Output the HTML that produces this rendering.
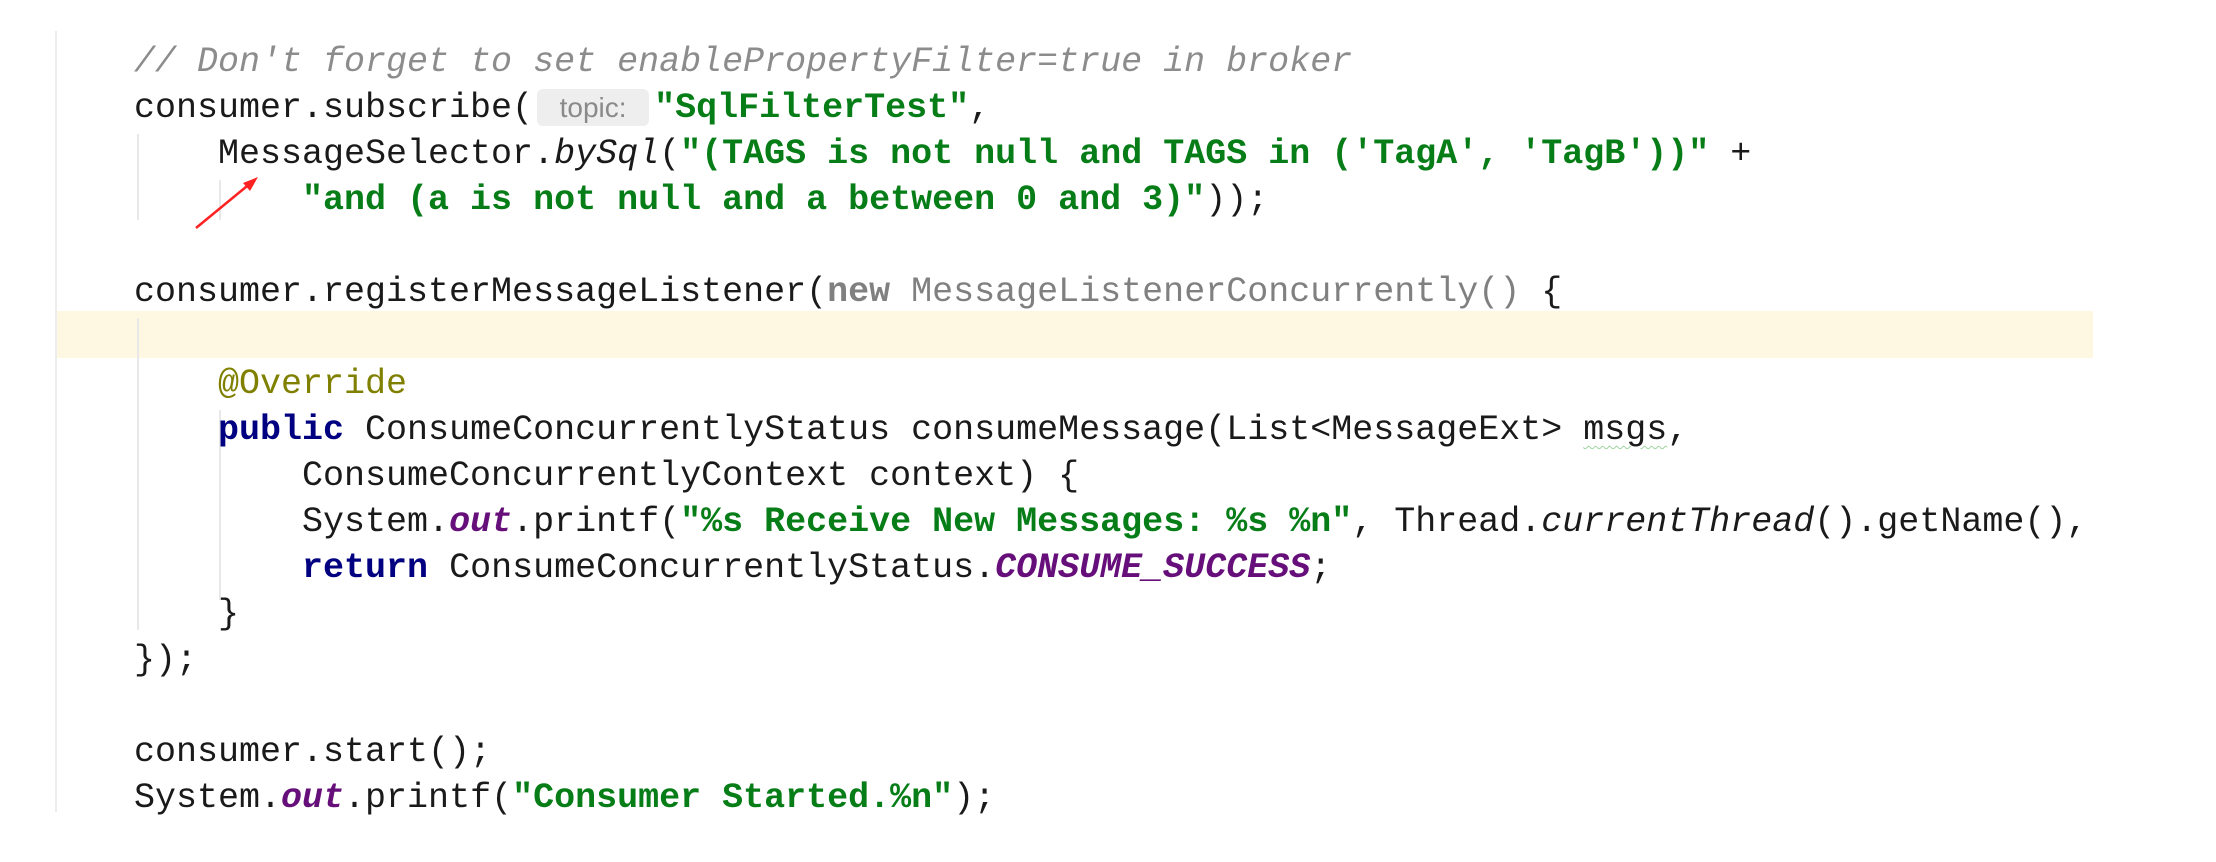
<!DOCTYPE html>
<html><head><meta charset="utf-8"><style>
html,body{margin:0;padding:0;background:#fff;width:2216px;height:862px;overflow:hidden;position:relative}
.gut{position:absolute;left:55px;top:31px;width:2px;height:781px;background:#ededed}
.hl{position:absolute;left:57px;top:311px;width:2036px;height:47px;background:#fef8e2}
.g{position:absolute;width:2px;background:#e8e8e8}
.code{position:absolute;left:134px;top:39px;font-family:"Liberation Mono",monospace;font-size:35px;line-height:46px;color:#1a1a1a;white-space:pre}
.s{color:#067d17;font-weight:bold}
.k{color:#000080;font-weight:bold}
.c{color:#8c8c8c;font-style:italic}
.a{color:#808000}
.p{color:#660e7a;font-style:italic;font-weight:bold}
.i{font-style:italic}
.gr{color:#808080}
.hint{display:inline-block;margin-left:4px;margin-right:5px;width:112px;height:37px;line-height:37px;vertical-align:0px;background:#eeeeee;border-radius:6px;color:#8a8a8a;font-family:"Liberation Sans",sans-serif;font-size:28px;text-align:center}
.sq{text-decoration:underline wavy #9fd39f;text-decoration-thickness:1px;text-underline-offset:6px}
</style></head><body>
<div class="gut"></div>
<div class="hl"></div>
<div class="g" style="left:137px;top:134px;height:86px"></div>
<div class="g" style="left:137px;top:318px;height:312px"></div>
<div class="g" style="left:219px;top:180px;height:40px"></div>
<div class="g" style="left:219px;top:410px;height:190px"></div>
<div class="code"><span class="c">// Don't forget to set enablePropertyFilter=true in broker</span>
consumer.subscribe(<span class="hint">topic:</span><span class="s">"SqlFilterTest"</span>,
    MessageSelector.<span class="i">bySql</span>(<span class="s">"(TAGS is not null and TAGS in ('TagA', 'TagB'))"</span> +
        <span class="s">"and (a is not null and a between 0 and 3)"</span>));

consumer.registerMessageListener(<span class="gr"><b>new</b> MessageListenerConcurrently()</span> {

    <span class="a">@Override</span>
    <span class="k">public</span> ConsumeConcurrentlyStatus consumeMessage(List&lt;MessageExt&gt; <span class="sq">msgs</span>,
        ConsumeConcurrentlyContext context) {
        System.<span class="p">out</span>.printf(<span class="s">"%s Receive New Messages: %s %n"</span>, Thread.<span class="i">currentThread</span>().getName(),
        <span class="k">return</span> ConsumeConcurrentlyStatus.<span class="p">CONSUME_SUCCESS</span>;
    }
});

consumer.start();
System.<span class="p">out</span>.printf(<span class="s">"Consumer Started.%n"</span>);</div>
<svg style="position:absolute;left:0;top:0" width="2216" height="862">
<line x1="196" y1="228" x2="252" y2="182" stroke="#f22" stroke-width="2.5"/>
<polygon points="258,177 243,183 250,191" fill="#f22"/>
</svg>
</body></html>
